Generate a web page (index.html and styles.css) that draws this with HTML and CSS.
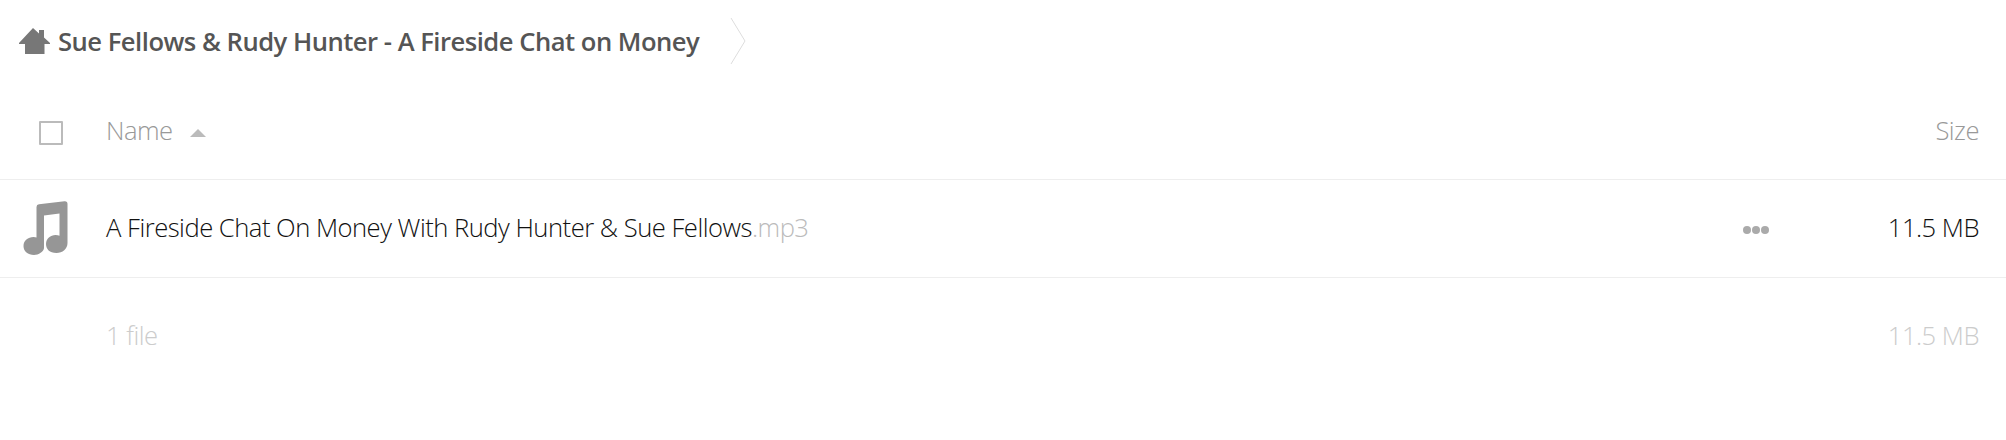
FILE: index.html
```html
<!DOCTYPE html>
<html lang="en">
<head>
  <meta charset="UTF-8" />
  <title>Sue Fellows &amp; Rudy Hunter - A Fireside Chat on Money</title>
  <link rel="stylesheet" href="styles.css">
</head>
<body>

  <!-- Breadcrumb -->
  <div class="crumbs">
    <svg class="home-icon" viewBox="0 0 31 26" width="31" height="26">
      <path fill="#777" d="M0 15 L14 0 L20 5.500 V2 H25 V9.500 L31 15 V16 H25.500 V26 H6 V16 H0 Z"/>
    </svg>
    <span class="crumb-title">Sue Fellows &amp; Rudy Hunter - A Fireside Chat on Money</span>
    <svg class="crumb-sep" viewBox="0 0 16 46" width="16" height="46">
      <path fill="none" stroke="#ddd" stroke-width="1" d="M1 0 L15 23 L1 46"/>
    </svg>
  </div>

  <!-- File table -->
  <div class="row head-row">
    <div class="check-col"><span class="checkbox"></span></div>
    <div class="name-col head-text">Name <span class="sort-arrow"></span></div>
    <div class="size-col head-text">Size</div>
  </div>

  <div class="row file-row">
    <div class="check-col">
      <svg class="music-icon" viewBox="0 0 44 54" width="45" height="54">
        <path fill="#969696" d="M13 6 Q13 3.5 15.500 3.200 L41 0.200 Q44 0 44 3 V42 C44 48 39 52 33 52 C26 52 22.500 48 22.500 43 C22.500 37.500 27 34 32 34 Q34.500 34 36 34.800 V12.500 L20.500 14.500 V47 C20.500 50.500 15 54 10.500 54 C4.500 54 0 50.500 0 45 C0 39.500 4.500 36 10 36 Q12 36 13 36.500 Z"/>
      </svg>
    </div>
    <div class="name-col file-name">A Fireside Chat On Money With Rudy Hunter &amp; Sue Fellows<span class="ext">.mp3</span></div>
    <div class="actions"><i></i><i></i><i></i></div>
    <div class="size-col file-size">11.5 MB</div>
  </div>

  <div class="row summary-row">
    <div class="check-col"></div>
    <div class="name-col">1 file</div>
    <div class="size-col">11.5 MB</div>
  </div>

</body>
</html>
```

FILE: styles.css
```css
body {
  margin: 0;
  background: #fff;
  font-family: "Open Sans", "Liberation Sans", sans-serif;
  font-size: 25.6px;
  font-weight: 300;
  letter-spacing: -0.5px;
  color: #111;
}

.crumbs {
  display: flex;
  align-items: center;
  height: 82px;
  padding-left: 19px;
}

.home-icon {
  margin-right: 8px;
}

.crumb-title {
  font-weight: 600;
  color: #555;
}

.crumb-sep {
  margin-left: 31px;
}

.row {
  display: flex;
  align-items: center;
  padding-right: 27px;
}

.head-row {
  height: 97px;
  border-bottom: 1px solid #eee;
}

.file-row {
  height: 97px;
  border-bottom: 1px solid #eee;
}

.summary-row {
  height: 114px;
  color: #ccc;
}

.check-col {
  width: 106px;
  padding-left: 23px;
  box-sizing: border-box;
  flex-shrink: 0;
}

.checkbox {
  display: block;
  width: 20px;
  height: 20px;
  margin: 4px 0 0 16px;
  border: 2px solid #bbb;
  border-radius: 1px;
}

.music-icon {
  display: block;
  margin-top: -2px;
}

.name-col {
  flex: 1;
}

.file-name {
  margin-top: -2px;
}

.head-text {
  color: #999;
}

.sort-arrow {
  display: inline-block;
  width: 0;
  height: 0;
  margin: 0 0 3px 11px;
  border-left: 8px solid transparent;
  border-right: 8px solid transparent;
  border-bottom: 8px solid #bbb;
}

.ext {
  color: #bbb;
}

.actions {
  display: flex;
  gap: 1px;
  margin: 3px 119px 0 0;
}

.actions i {
  display: block;
  width: 8px;
  height: 8px;
  border-radius: 50%;
  background: #aaa;
}

.size-col {
  text-align: right;
}

.file-size {
  margin-top: -2px;
}
```
